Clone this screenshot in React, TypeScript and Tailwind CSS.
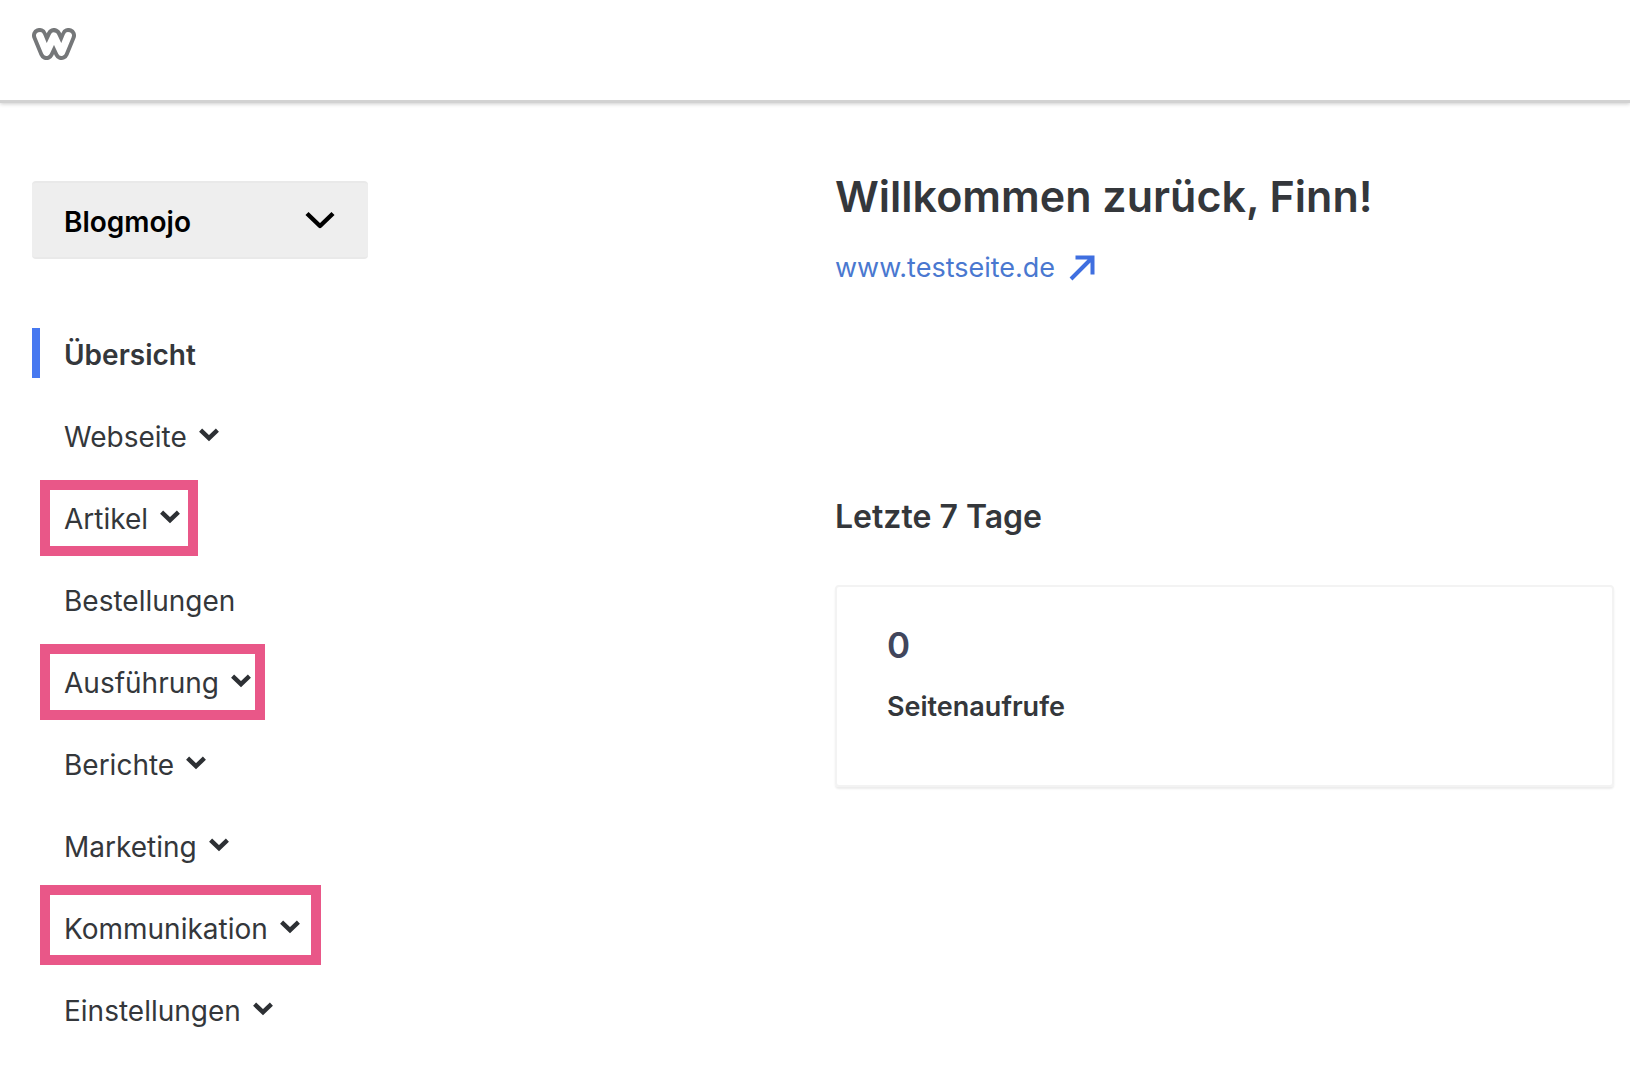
import clsx from "clsx";

type NavItem = {
	label: string;
	active?: boolean;
	expandable?: boolean;
	marker?: string;
};

const NAV_ITEMS: NavItem[] = [
	{ label: "Übersicht", active: true },
	{ label: "Webseite", expandable: true },
	{ label: "Artikel", expandable: true, marker: "-top-3 -right-[18px] h-[76px]" },
	{ label: "Bestellungen" },
	{ label: "Ausführung", expandable: true, marker: "-top-3 -right-[14px] h-[76px]" },
	{ label: "Berichte", expandable: true },
	{ label: "Marketing", expandable: true },
	{ label: "Kommunikation", expandable: true, marker: "-top-[17px] -right-[21px] h-20" },
	{ label: "Einstellungen", expandable: true },
];

const Logo: React.FC = () => (
	<svg width="44" height="33" viewBox="0 0 44 33" fill="none" aria-hidden="true">
		<g strokeLinecap="round" strokeLinejoin="round">
			<path
				d="M7.5 7.5 14.5 24.5 22 7.5 29.5 24.5 36.5 7.5"
				stroke="#757779"
				strokeWidth="15"
			/>
			<path d="M7.8 7.8 14.5 24.2 22 8.2 29.5 24.2 36.2 7.8" stroke="#fff" strokeWidth="7.4" />
		</g>
	</svg>
);

const SmallChevron: React.FC = () => (
	<svg
		className="mb-1 shrink-0"
		width="20"
		height="14"
		viewBox="0 0 20 14"
		fill="none"
		aria-hidden="true"
	>
		<path d="M1.6 2.2 10 10.2 18.4 2.2" stroke="#2d3034" strokeWidth="4.4" />
	</svg>
);

const SiteMenu: React.FC = () => (
	<button
		type="button"
		className="flex h-[78px] w-[336px] items-center justify-between rounded-sm border-y-2 border-[#e9e9e9] bg-[#eeeeee] pr-8 pl-8 text-[28px] leading-9 font-semibold text-black"
	>
		<span className="pt-1">Blogmojo</span>
		<svg width="32" height="20" viewBox="0 0 32 20" fill="none" aria-hidden="true">
			<path
				d="M3 3.5 16 16 29 3.5"
				stroke="#000"
				strokeWidth="4.4"
				strokeLinejoin="round"
			/>
		</svg>
	</button>
);

const NavLink: React.FC<{ item: NavItem }> = ({ item }) => (
	<li
		className={clsx(
			"flex h-[50px] items-center border-l-8 pl-6",
			item.active ? "border-[#4678f0]" : "border-transparent",
		)}
	>
		<a
			href="#"
			className={clsx(
				"relative flex h-[50px] items-center gap-3 pt-1 text-[28px] leading-9 text-[#34373b]",
				item.active && "font-semibold",
			)}
		>
			{item.label}
			{item.expandable && <SmallChevron />}
			{item.marker && (
				<span
					className={clsx(
						"pointer-events-none absolute -left-6 border-10 border-[#e95788]",
						item.marker,
					)}
				/>
			)}
		</a>
	</li>
);

export default function App() {
	return (
		<div className="min-h-screen bg-white font-['Inter',sans-serif] text-[#34373b]">
			<header className="flex h-[103px] items-start border-b-3 border-[#d2d2d2] px-8 pt-7 shadow-[0_1px_4px_rgba(0,0,0,0.2)]">
				<a href="#" aria-label="Weebly">
					<Logo />
				</a>
			</header>
			<div className="grid grid-cols-2">
				<aside className="pt-[78px] pl-8">
					<SiteMenu />
					<nav className="mt-[69px]">
						<ul className="flex flex-col gap-8">
							{NAV_ITEMS.map((item) => (
								<NavLink key={item.label} item={item} />
							))}
						</ul>
					</nav>
				</aside>
				<main className="pt-[65px] pr-4 pl-5">
					<h1 className="text-[43px] leading-[56px] font-semibold">
						Willkommen zurück, Finn!
					</h1>
					<a
						href="#"
						className="mt-6 flex items-center gap-[14px] text-[27px] leading-10 text-[#4a78d0]"
					>
						www.testseite.de
						<svg width="26" height="26" viewBox="0 0 26 26" fill="none" aria-hidden="true">
							<path d="M6.5 2.5H23.5V19.5M23.5 2.5 2 24" stroke="#3f6fe0" strokeWidth="4" />
						</svg>
					</a>
					<h2 className="mt-[209px] text-[32px] leading-10 font-semibold">
						Letzte 7 Tage
					</h2>
					<section className="mt-12 rounded-sm border-2 border-[#f3f3f3] px-[50px] pt-[34px] pb-[58px] shadow-[0_2px_2px_rgba(0,0,0,0.08)]">
						<p className="text-[35px] leading-12 font-semibold text-[#41465c]">0</p>
						<p className="mt-[18px] text-[27px] leading-10 font-semibold">Seitenaufrufe</p>
					</section>
				</main>
			</div>
		</div>
	);
}
